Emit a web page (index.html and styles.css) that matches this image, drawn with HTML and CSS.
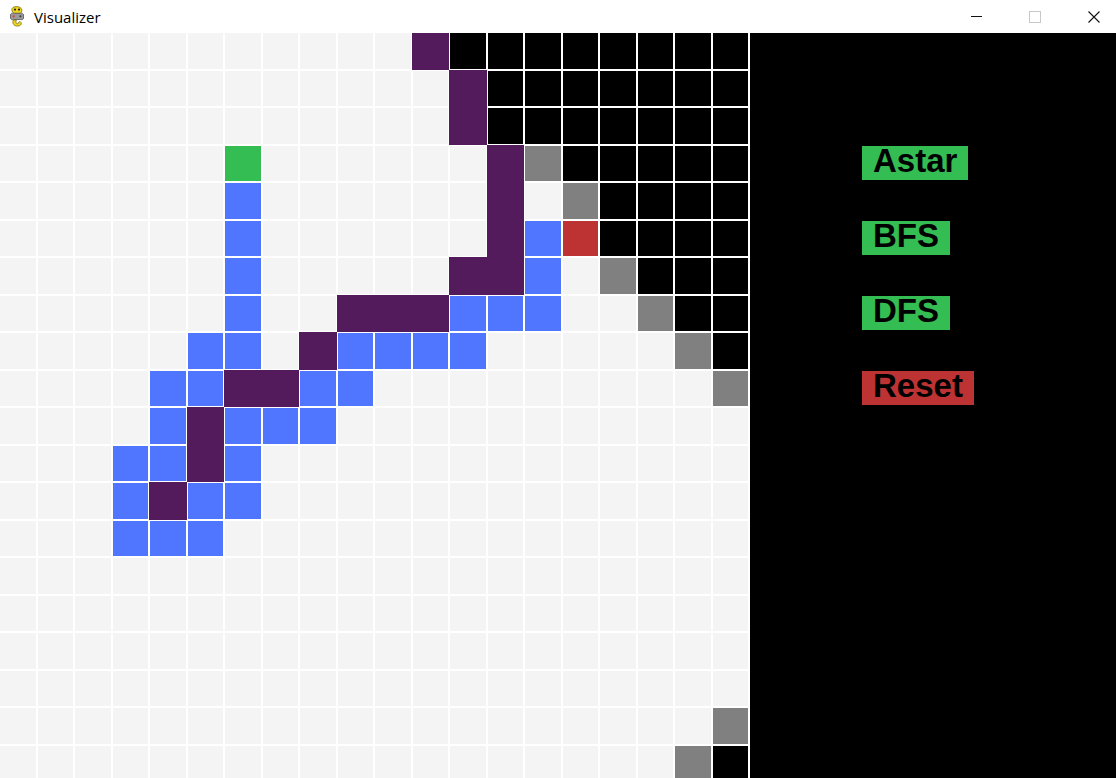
FILE: index.html
```html
<!DOCTYPE html>
<html lang="en">
<head>
  <meta charset="UTF-8" />
  <title>Visualizer</title>
  <link rel="stylesheet" href="styles.css">
</head>
<body>

  <!-- Title bar -->
  <div class="titlebar">
    <div class="title">
      <svg class="app-icon" width="16" height="21" viewBox="0 0 16 21">
        <path d="M4 1.5 C6 0.3 9 0.3 11 1.5 C13 2.5 13.5 5 12 6.5 L11 7.5 L5 7.5 L3.6 6 C2.5 4.5 2.6 2.4 4 1.5 Z" fill="#f2d81c" stroke="#7a6a10" stroke-width="0.8"/>
        <circle cx="6" cy="3.6" r="1.1" fill="#222"/>
        <circle cx="10" cy="3.6" r="1.1" fill="#222"/>
        <path d="M1.5 9 C1.5 7.5 3 7 4.5 7.2 L11.5 7.2 C13 7 14.5 7.5 14.5 9 L14.5 12 C14.5 13.5 13 14 11.5 13.5 L4.5 13.5 C3 14 1.5 13.5 1.5 12 Z" fill="#9a9a9a" stroke="#555" stroke-width="0.8"/>
        <circle cx="4.6" cy="10.3" r="1.1" fill="#e33"/>
        <circle cx="11.4" cy="10.3" r="1.1" fill="#444"/>
        <path d="M4.5 14 C3 16 4 19.5 7.5 20 C11 20.3 13 18.5 12 16.5 C11.3 15.2 9.5 15.4 9.6 16.8 C9.7 17.8 8 18 7.3 17.2 C6.6 16.4 7 15 7.4 14 Z" fill="#f2d81c" stroke="#7a6a10" stroke-width="0.8"/>
      </svg>
      <span>Visualizer</span>
    </div>
    <div class="controls">
      <span class="ctl-min"></span>
      <span class="ctl-max"></span>
      <svg class="ctl-close" width="12" height="12" viewBox="0 0 12 12">
        <path d="M0.5 0.5 L11.5 11.5 M11.5 0.5 L0.5 11.5" stroke="#111" stroke-width="1.1"/>
      </svg>
    </div>
  </div>

  <!-- Window contents -->
  <div class="window">
    <div class="grid" id="grid"></div>

    <div class="panel">
      <button class="btn green">Astar</button>
      <button class="btn green">BFS</button>
      <button class="btn green">DFS</button>
      <button class="btn red">Reset</button>
    </div>
  </div>

  <script>
    // . empty, P path, B visited, G start, R end, X barrier, g open set
    const board = [
      '...........PXXXXXXXX',
      '............PXXXXXXX',
      '............PXXXXXXX',
      '......G......PgXXXXX',
      '......B......P.gXXXX',
      '......B......PBRXXXX',
      '......B.....PPB.gXXX',
      '......B..PPPBBB..gXX',
      '.....BB.PBBBB.....gX',
      '....BBPPBB.........g',
      '....BPBBB...........',
      '...BBPB.............',
      '...BPBB.............',
      '...BBB..............',
      '....................',
      '....................',
      '....................',
      '....................',
      '...................g',
      '..................gX'
    ];
    const kinds = { '.': 'empty', P: 'path', B: 'closed', G: 'start', R: 'end', X: 'barrier', g: 'open' };
    const grid = document.getElementById('grid');
    board.forEach(row => {
      for (const ch of row) {
        const cell = document.createElement('div');
        cell.className = 'cell ' + kinds[ch];
        grid.appendChild(cell);
      }
    });
  </script>
</body>
</html>
```

FILE: styles.css
```css
body {
  margin: 0;
  width: 1116px;
  height: 778px;
  overflow: hidden;
  background: #000;
  font-family: "Liberation Sans", Arial, sans-serif;
}

/* Title bar */
.titlebar {
  height: 33px;
  background: #fff;
  display: flex;
  align-items: center;
  justify-content: space-between;
}

.title {
  display: flex;
  align-items: center;
  padding-left: 9px;
  font-family: "Open Sans", "Noto Sans", sans-serif;
  font-size: 15px;
  color: #000;
}

.app-icon {
  margin-right: 9px;
}

.controls {
  display: flex;
  align-items: center;
  gap: 47px;
  padding-right: 16px;
}

.ctl-min {
  width: 11px;
  height: 1px;
  background: #111;
}

.ctl-max {
  width: 10px;
  height: 10px;
  border: 1px solid #c8c8c8;
}

/* Main area */
.window {
  display: flex;
  height: 745px;
  overflow: hidden;
}

.grid {
  display: grid;
  grid-template-columns: repeat(20, 35.5px);
  grid-auto-rows: 35.5px;
  gap: 2px;
  padding: 0 2px 2px 0;
  background: #fff;
  align-self: flex-start;
  flex: none;
}

.cell.empty { background: #f4f4f4; }
.cell.barrier { background: #000; }
.cell.open { background: #808080; }
.cell.closed { background: #5075ff; }
.cell.start { background: #33bd52; }
.cell.end { background: #bd3333; }

.cell.path {
  background: #531b5c;
  box-shadow: 0 0 0 1px #531b5c;
}

/* Side panel */
.panel {
  flex: 1;
  background: #000;
  display: flex;
  flex-direction: column;
  align-items: flex-start;
  gap: 41px;
  padding: 113px 0 0 112px;
}

.btn {
  font-family: "Liberation Sans", Arial, sans-serif;
  font-weight: bold;
  font-size: 33px;
  line-height: 30px;
  height: 34px;
  padding: 0 11px 4px;
  border: 0;
  color: #000;
  cursor: pointer;
}

.green { background: #33bd52; }
.red { background: #bd3333; }
```
